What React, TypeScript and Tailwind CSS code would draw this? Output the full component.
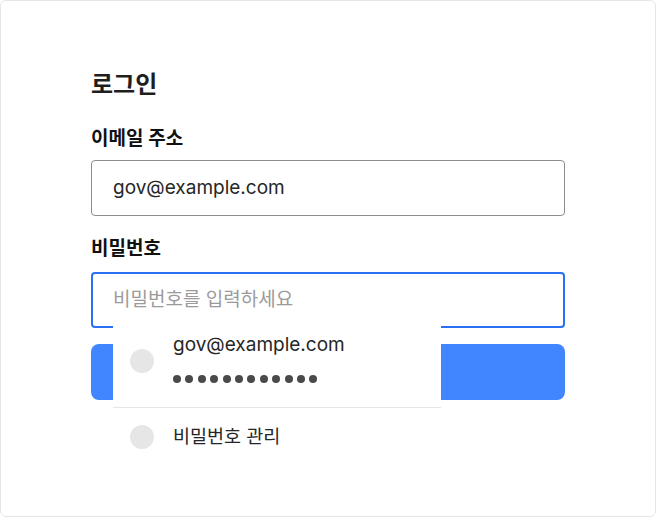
const font = "font-['Inter','Noto_Sans_CJK_KR',sans-serif]";

function Dots({ count }: { count: number }) {
  return (
    <div className="flex gap-[4.4px]">
      {Array.from({ length: count }).map((_, i) => (
        <span key={i} className="w-2 h-2 rounded-full bg-[#4a4a4a]" />
      ))}
    </div>
  );
}

export default function App() {
  return (
    <div className={`${font} w-[656px] h-[517px] bg-white`}>
      <div className="w-full h-full border border-[#e6e6e6] rounded-md px-[90px] pt-[68px]">
        <h1 className="text-[24px] leading-[32px] font-bold text-[#1e1e1e]">로그인</h1>

        <label className="block mt-[26px] text-[19px] leading-[24px] font-semibold text-[#111]">
          이메일 주소
        </label>
        <div className="mt-[9px] h-[56px] flex items-center border border-[#8c8c8c] rounded-[4px] pl-[21px] text-[19px] text-[#262626]">
          gov@example.com
        </div>

        <label className="block mt-[21px] text-[19px] leading-[24px] font-semibold text-[#111]">
          비밀번호
        </label>
        <div className="relative mt-[11px]">
          <div className="h-[56px] flex items-center border-2 border-[#2a6ff4] rounded-[4px] pl-[20px] text-[19px] text-[#9b9b9b]">
            비밀번호를 입력하세요
          </div>

          <div className="absolute z-10 left-[22px] top-[53px] w-[328px] bg-white">
            <div className="h-[82px] flex items-start pl-[17px] pt-[8px] gap-[19px]">
              <span className="mt-[16px] w-6 h-6 rounded-full bg-[#e6e6e6]" />
              <div className="flex flex-col">
                <span className="text-[19px] leading-[24px] text-[#262626]">gov@example.com</span>
                <div className="mt-[18px]">
                  <Dots count={12} />
                </div>
              </div>
            </div>
            <div className="h-px bg-[#e6e6e6]" />
            <div className="h-[56px] flex items-center pl-[17px] gap-[19px] pt-[1px]">
              <span className="w-6 h-6 rounded-full bg-[#e6e6e6]" />
              <span className="text-[18.5px] text-[#262626]">비밀번호 관리</span>
            </div>
          </div>
        </div>

        <button className="mt-[16px] w-full h-[56px] rounded-lg bg-[#4185ff]" />
      </div>
    </div>
  );
}
